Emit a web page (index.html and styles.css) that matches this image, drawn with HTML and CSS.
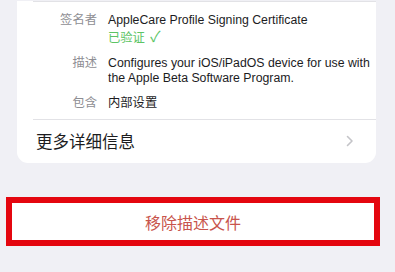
FILE: index.html
```html
<html>
<head>
  <link rel="stylesheet" href="styles.css">
</head>
<body>
  <div class="card">
    <div class="info">
      <div class="row">
        <div class="label">签名者</div>
        <div class="value">
          AppleCare Profile Signing Certificate
          <div class="verified">已验证 <span class="check">✓</span></div>
        </div>
      </div>
      <div class="row">
        <div class="label">描述</div>
        <div class="value">Configures your iOS/iPadOS device for use with the Apple Beta Software Program.</div>
      </div>
      <div class="row">
        <div class="label">包含</div>
        <div class="value">内部设置</div>
      </div>
    </div>
    <div class="more">
      <span>更多详细信息</span>
      <svg class="chevron" width="8" height="12" viewBox="0 0 8 12">
        <path d="M1.5 1.5 L6 6 L1.5 10.5" fill="none" stroke="#c4c4c8" stroke-width="1.6" stroke-linecap="round" stroke-linejoin="round"/>
      </svg>
    </div>
  </div>
  <div class="remove">
    <div class="remove-btn">移除描述文件</div>
  </div>
</body>
</html>
```

FILE: styles.css
```css
body {
  margin: 0;
  background-color: #f0f0f5;
  font-family: "Liberation Sans", "Noto Sans CJK SC", sans-serif;
  color: #1c1c1e;
}

.card {
  margin-left: 17px;
  width: 359px;
  background-color: white;
  border-radius: 0 0 11px 11px;
}

.info {
  margin-left: 16px;
  border-top: 1px solid #e2e2e6;
  border-bottom: 1px solid #e2e2e6;
  margin-top: 1px;
  padding: 11px 0 8px 0;
}

.row {
  display: flex;
  font-size: 12.3px;
  line-height: 14.5px;
  margin-bottom: 11px;
}

.row:last-child {
  margin-bottom: 0;
}

.label {
  width: 64px;
  flex-shrink: 0;
  text-align: right;
  color: #8e8e93;
}

.value {
  margin-left: 11px;
}

.verified {
  color: #5cc465;
  margin-top: 2px;
}

.check {
  font-size: 15px;
  margin-left: 2px;
}

.more {
  display: flex;
  align-items: center;
  justify-content: space-between;
  padding: 0 22px 0 19px;
  height: 43px;
  font-size: 16.5px;
}

.remove {
  margin: 34px 0 0 6px;
  width: 374px;
  border: 6px solid #e4060f;
  box-sizing: border-box;
  background-color: white;
}

.remove-btn {
  height: 37px;
  padding-top: 2px;
  box-sizing: border-box;
  display: flex;
  align-items: center;
  justify-content: center;
  font-size: 16px;
  color: #c8544c;
}
```
